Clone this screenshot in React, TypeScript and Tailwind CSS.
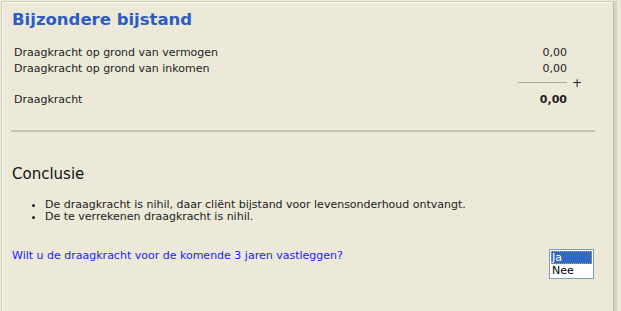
export default function App() {
  const rows = [
    { label: "Draagkracht op grond van vermogen", value: "0,00" },
    { label: "Draagkracht op grond van inkomen", value: "0,00" },
  ];

  return (
    <div className="w-[621px] h-[311px] overflow-hidden bg-[#ECE9D8] pl-px pt-px font-['DejaVu_Sans',Verdana,sans-serif] text-[11px] text-[#222]">
      <div className="w-[616px] h-[320px] border-l border-t border-[#cfccb8] border-r-[3px] border-r-[#d6d3c2] shadow-[inset_1px_1px_0_#f8f7f0]">
        <div className="w-[612px] h-full border-r border-[#c2bfa9] pl-[10px] pr-[18px] pt-[7px]">
          <h1 className="text-[16.5px] leading-[22px] font-bold text-[#2c5cc5]">Bijzondere bijstand</h1>

          <div className="mt-[14px] pl-[2px] w-[567px]">
            {rows.map((r) => (
              <div key={r.label} className="flex justify-between h-[16px] leading-[16px]">
                <span>{r.label}</span>
                <span className="pr-[12px]">{r.value}</span>
              </div>
            ))}
            <div className="flex justify-end items-center h-[15px] -mt-[2px] mb-[2px]">
              <div className="w-[49px] h-px bg-[#a9a797]" />
              <span className="w-[12px] pl-[5px] text-[12px] leading-none">+</span>
            </div>
            <div className="flex justify-between h-[16px] leading-[16px]">
              <span>Draagkracht</span>
              <span className="pr-[12px] font-bold">0,00</span>
            </div>
          </div>

          <div className="mt-[22px] -ml-px w-[584px] border-t-2 border-[#c5c2b0]" />

          <h2 className="mt-[32px] text-[15px] leading-[20px] text-[#111]">Conclusie</h2>

          <ul className="mt-[15px] pl-[33px] list-disc leading-[12px]">
            <li>De draagkracht is nihil, daar cliënt bijstand voor levensonderhoud ontvangt.</li>
            <li>De te verrekenen draagkracht is nihil.</li>
          </ul>

          <div className="mt-[25px] flex justify-between items-start w-[582px]">
            <span className="text-[#1a1aff]">Wilt u de draagkracht voor de komende 3 jaren vastleggen?</span>
            <div className="mt-px w-[45px] border border-[#7f9db9] bg-white p-px text-[11px] leading-[13px] text-black">
              <div className="bg-[#316ac5] text-white outline-1 outline-dotted outline-[#c8a060] -outline-offset-1 pl-[1px]">Ja</div>
              <div className="pl-[1px]">Nee</div>
            </div>
          </div>
        </div>
      </div>
    </div>
  );
}
